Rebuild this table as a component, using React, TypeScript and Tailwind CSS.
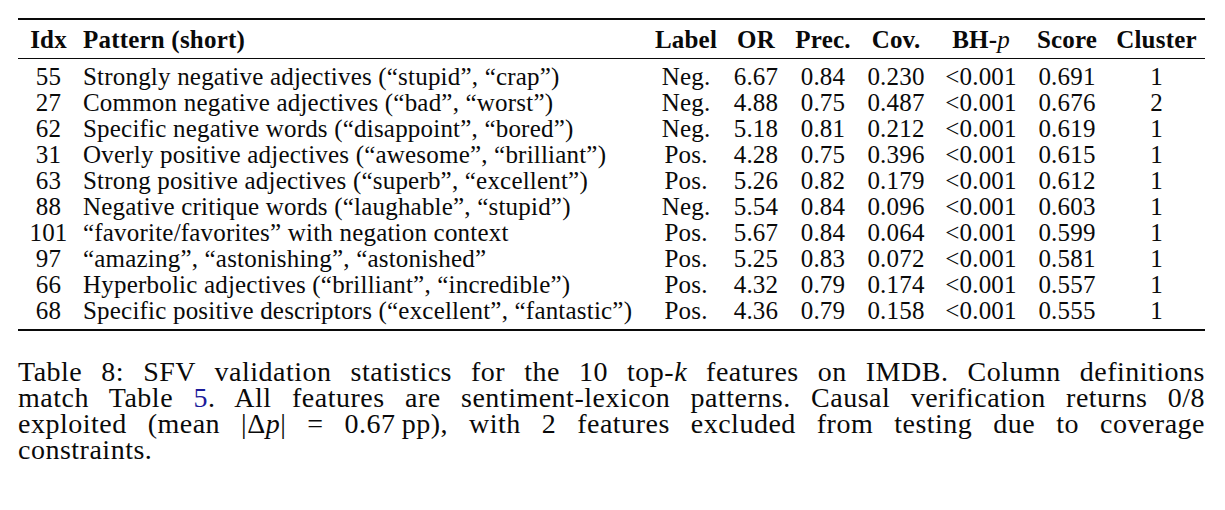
import React from "react";

type Row = {
  idx: string;
  pattern: string;
  label: string;
  or: string;
  prec: string;
  cov: string;
  score: string;
  cluster: string;
};

const rows: Row[] = [
  { idx: "55", pattern: "Strongly negative adjectives (“stupid”, “crap”)", label: "Neg.", or: "6.67", prec: "0.84", cov: "0.230", score: "0.691", cluster: "1" },
  { idx: "27", pattern: "Common negative adjectives (“bad”, “worst”)", label: "Neg.", or: "4.88", prec: "0.75", cov: "0.487", score: "0.676", cluster: "2" },
  { idx: "62", pattern: "Specific negative words (“disappoint”, “bored”)", label: "Neg.", or: "5.18", prec: "0.81", cov: "0.212", score: "0.619", cluster: "1" },
  { idx: "31", pattern: "Overly positive adjectives (“awesome”, “brilliant”)", label: "Pos.", or: "4.28", prec: "0.75", cov: "0.396", score: "0.615", cluster: "1" },
  { idx: "63", pattern: "Strong positive adjectives (“superb”, “excellent”)", label: "Pos.", or: "5.26", prec: "0.82", cov: "0.179", score: "0.612", cluster: "1" },
  { idx: "88", pattern: "Negative critique words (“laughable”, “stupid”)", label: "Neg.", or: "5.54", prec: "0.84", cov: "0.096", score: "0.603", cluster: "1" },
  { idx: "101", pattern: "“favorite/favorites” with negation context", label: "Pos.", or: "5.67", prec: "0.84", cov: "0.064", score: "0.599", cluster: "1" },
  { idx: "97", pattern: "“amazing”, “astonishing”, “astonished”", label: "Pos.", or: "5.25", prec: "0.83", cov: "0.072", score: "0.581", cluster: "1" },
  { idx: "66", pattern: "Hyperbolic adjectives (“brilliant”, “incredible”)", label: "Pos.", or: "4.32", prec: "0.79", cov: "0.174", score: "0.557", cluster: "1" },
  { idx: "68", pattern: "Specific positive descriptors (“excellent”, “fantastic”)", label: "Pos.", or: "4.36", prec: "0.79", cov: "0.158", score: "0.555", cluster: "1" },
];

function Cells({ r, bold }: { r: React.ReactNode[]; bold?: boolean }) {
  return (
    <div className={`flex h-[26px] items-center ${bold ? "font-bold" : ""}`}>
      <div className="w-[61px] text-center">{r[0]}</div>
      <div className="w-[561px] pl-[4px] text-left whitespace-nowrap">{r[1]}</div>
      <div className="w-[92px] text-center">{r[2]}</div>
      <div className="w-[48px] text-center">{r[3]}</div>
      <div className="w-[86px] text-center">{r[4]}</div>
      <div className="w-[60px] text-center">{r[5]}</div>
      <div className="w-[110px] text-center whitespace-nowrap">{r[6]}</div>
      <div className="w-[62px] text-center">{r[7]}</div>
      <div className="w-[107px] pl-[10px] text-center">{r[8]}</div>
    </div>
  );
}

function Line({ children, last }: { children: React.ReactNode; last?: boolean }) {
  return (
    <div className={`h-[26px] whitespace-nowrap ${last ? "text-left" : "text-justify [text-align-last:justify]"}`}>
      {children}
    </div>
  );
}

export default function App() {
  return (
    <div className="w-[1225px] h-[510px] bg-white text-[#0a0a0a] font-['Liberation_Serif',serif] overflow-hidden">
      <div className="pl-[18px] pt-[18px] w-[1205px]">
        <div className="border-t-2 border-[#0a0a0a]" />
        <div className="text-[25px] leading-[26px] tracking-[0.2px]">
          <div className="pt-[7px] pb-[5px]">
            <Cells
              bold
              r={[
                "Idx",
                "Pattern (short)",
                "Label",
                "OR",
                "Prec.",
                "Cov.",
                <span>
                  BH-<span className="italic font-normal">p</span>
                </span>,
                "Score",
                "Cluster",
              ]}
            />
          </div>
          <div className="border-t border-[#0a0a0a]" />
          <div className="pt-[5px] pb-[5px]">
            {rows.map((row) => (
              <Cells
                key={row.idx}
                r={[row.idx, row.pattern, row.label, row.or, row.prec, row.cov, "<0.001", row.score, row.cluster]}
              />
            ))}
          </div>
        </div>
        <div className="border-t-2 border-[#0a0a0a]" />
        <div className="mt-[28px] text-[28px] leading-[26px] tracking-[0.5px]">
          <Line>
            Table 8: SFV validation statistics for the 10 top-<span className="italic">k</span> features on IMDB. Column definitions
          </Line>
          <Line>
            match Table <span className="text-[#1a1a9a]">5</span>. All features are sentiment-lexicon patterns. Causal verification returns 0/8
          </Line>
          <Line>
            exploited (mean |Δ<span className="italic">p</span>| = 0.67&#8201;pp), with 2 features excluded from testing due to coverage
          </Line>
          <Line last>constraints.</Line>
        </div>
      </div>
    </div>
  );
}
